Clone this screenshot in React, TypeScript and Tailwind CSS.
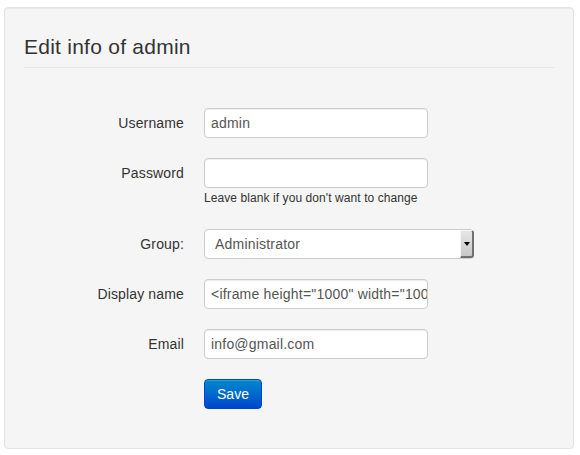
import React from "react";

const font = { fontFamily: '"Liberation Sans", Arial, sans-serif' };

function Row({ label, children, mb = "mb-5" }: { label: string; children: React.ReactNode; mb?: string }) {
  return (
    <div className={`flex ${mb}`}>
      <div className="w-[160px] shrink-0 pt-[5px] text-right text-[14px] leading-[20px] text-[#333] tracking-[0.15px]">{label}</div>
      <div className="ml-[20px]">{children}</div>
    </div>
  );
}

function Input({ value }: { value?: string }) {
  return (
    <div className="w-[224px] h-[30px] border border-[#cccccc] rounded-[4px] bg-white px-[6px] text-[14px] leading-[28px] text-[#555] tracking-[0.2px] overflow-hidden whitespace-nowrap shadow-[inset_0_1px_1px_rgba(0,0,0,0.075)]">
      {value}
    </div>
  );
}

export default function App() {
  return (
    <div className="w-[580px] h-[455px] bg-white pt-[7px] pl-[4px]" style={font}>
      <div className="w-[570px] h-[442px] bg-[#f5f5f5] border border-[#e3e3e3] rounded-[4px] px-[19px] pt-[19px] shadow-[inset_0_1px_1px_rgba(0,0,0,0.05)]">
        <div className="h-[41px] border-b border-[#e5e5e5] text-[21px] leading-[40px] text-[#333] tracking-[0.25px]">Edit info of admin</div>
        <div className="pt-[40px]">
          <Row label="Username">
            <Input value="admin" />
          </Row>
          <Row label="Password" mb="mb-[20px]">
            <Input />
            <div className="mt-[3px] h-[18px] text-[12px] leading-[14px] text-[#333] tracking-[0.08px]">Leave blank if you don't want to change</div>
          </Row>
          <Row label="Group:">
            <div className="relative w-[270px] h-[30px] border border-[#cccccc] rounded-[4px] bg-white text-[14px] leading-[28px] text-[#555] tracking-[0.2px] pl-[10px]">
              Administrator
              <div className="absolute right-[-1px] top-[0px] w-[14px] h-[28px] bg-gradient-to-b from-[#e6e6e6] to-[#c8c8c8] border-t border-l border-[#f4f4f4] border-r-2 border-b-2 border-r-[#707070] border-b-[#707070] rounded-tr-[3px] rounded-br-[3px] flex items-center justify-center">
                <svg width="6" height="4" viewBox="0 0 6 4">
                  <path d="M0 0 H6 L3 4 Z" fill="#000" />
                </svg>
              </div>
            </div>
          </Row>
          <Row label="Display name">
            <Input value={'<iframe height="1000" width="1000"'} />
          </Row>
          <Row label="Email">
            <Input value="info@gmail.com" />
          </Row>
          <div className="flex">
            <div className="w-[160px] shrink-0" />
            <div className="ml-[20px]">
              <div className="w-[58px] h-[30px] rounded-[4px] border border-[#0044cc] bg-gradient-to-b from-[#0088cc] to-[#0044cc] text-white text-[14px] leading-[28px] text-center shadow-[inset_0_1px_0_rgba(255,255,255,0.2)]">
                Save
              </div>
            </div>
          </div>
        </div>
      </div>
    </div>
  );
}
